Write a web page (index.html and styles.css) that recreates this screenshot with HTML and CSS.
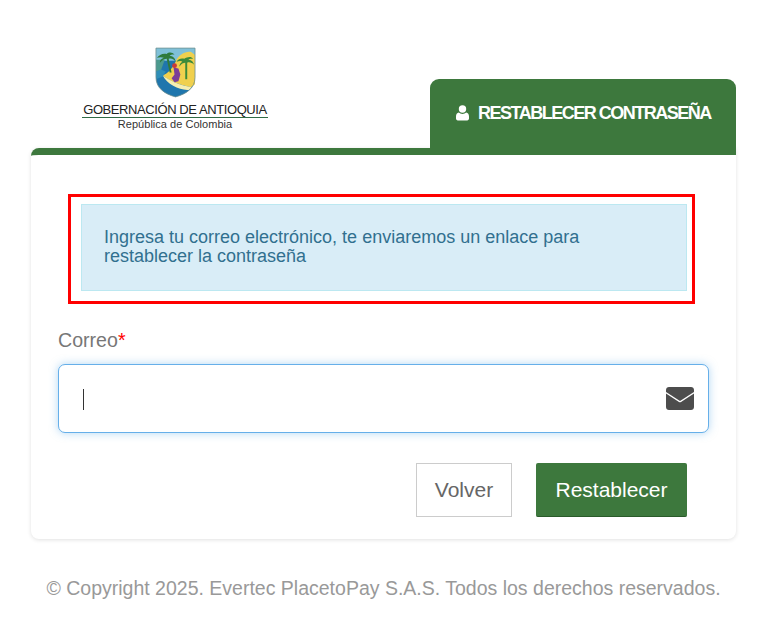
FILE: index.html
```html
<!DOCTYPE html>
<html lang="es">
<head>
<meta charset="utf-8">
<title>Restablecer contraseña</title>
<link rel="stylesheet" href="styles.css">
</head>
<body>
<main class="page">
  <header class="head">
    <div class="logo">
      <svg class="shield" width="41" height="51" viewBox="0 0 42 52">
        <path d="M1 1H41V31C41 42 32 48 21 51C10 48 1 42 1 31Z" fill="#1f76ad"/>
        <path d="M1 1H41V14H1Z" fill="#7fc0d8"/>
        <path d="M1 13H10L6 24L1 25Z" fill="#4b9a8e"/>
        <path d="M8 29C13 27 18 22 21 15C24 8 31 4 37 5L41 8V38L37 41C28 39 17 36 8 29Z" fill="#f0d04e"/>
        <path d="M8 29C14 34 26 39 37 41C37 43 35 44 33 44C24 43 12 38 8 29Z" fill="#f6eeb0"/>
        <path d="M1 25L6 23L11 25L8 30L1 33Z" fill="#2f8fb8"/>
        <path d="M12 7C8 6 4 8 2 11C5 10 7 10 9 11C6 12 5 14 5 16C8 13 10 12 12 12L15 26H17L14 12C17 11 20 13 21 15C21 11 18 9 15 9C16 8 18 7 20 8C18 5 14 5 12 7Z" fill="#2f7a3c"/>
        <path d="M30 12C27 11 24 12 22 15C25 14 27 14 28 15C26 16 25 18 25 20C27 17 29 16 31 16V33H33V16C35 15 38 16 40 18C39 14 36 13 34 13C35 12 37 12 39 12C37 9 33 10 30 12Z" fill="#3b8a3a"/>
        <path d="M19 21L24 22L26 28L24 35L20 36L17 32L20 28Z" fill="#7b3f98"/>
        <circle cx="20" cy="19" r="2.500" fill="#c83a3a"/>
        <path d="M1 1H41V31C41 42 32 48 21 51C10 48 1 42 1 31Z" fill="none" stroke="#6f8f8f" stroke-width=".8"/>
      </svg>
      <div class="logo-title">GOBERNACIÓN DE ANTIOQUIA</div>
      <div class="logo-sub">República de Colombia</div>
    </div>
    <h1 class="tab">
      <svg class="tab-icon" width="13" height="16" viewBox="0 0 13 16"><circle cx="6.500" cy="4" r="3.700" fill="#fff"/><path d="M2.800 7.600C3.800 8.500 5 9 6.500 9S9.200 8.500 10.200 7.600C12 7.800 13 9.400 13 11.500V13.500C13 14.600 12.200 15.400 11.200 15.400H1.800C.8 15.400 0 14.600 0 13.500V11.500C0 9.400 1 7.800 2.800 7.600Z" fill="#fff"/></svg>
      <span>RESTABLECER CONTRASEÑA</span>
    </h1>
  </header>
  <section class="card">
    <div class="highlight">
      <p class="alert">Ingresa tu correo electrónico, te enviaremos un enlace para restablecer la contraseña</p>
    </div>
    <form class="form">
      <label class="label" for="correo">Correo<span class="req">*</span></label>
      <div class="field">
        <span class="caret"></span>
        <input class="input" id="correo" type="email">
        <svg class="mail" width="28" height="23" viewBox="0 0 28 23"><path d="M3 0H25C26.700 0 28 1.300 28 3V5L14 14L0 5V3C0 1.300 1.300 0 3 0Z" fill="#4d4d4d"/><path d="M0 6.500L13 14.900C13.600 15.300 14.400 15.300 15 14.900L28 6.500V20C28 21.700 26.700 23 25 23H3C1.300 23 0 21.700 0 20Z" fill="#4d4d4d"/></svg>
      </div>
      <div class="actions">
        <a class="btn btn-back" href="#">Volver</a>
        <button class="btn btn-main" type="button">Restablecer</button>
      </div>
    </form>
  </section>
  <footer class="foot">© Copyright 2025. Evertec PlacetoPay S.A.S. Todos los derechos reservados.</footer>
</main>
</body>
</html>
```
FILE: styles.css
```css
* { box-sizing: border-box; }
html, body { margin: 0; background: #fff; }
body { font-family: "Liberation Sans", Arial, sans-serif; color: #777; }
.page { width: 705px; margin-left: 31px; }
.head { display: flex; justify-content: space-between; align-items: flex-end; height: 148px; }
.logo { width: 288px; display: flex; flex-direction: column; align-items: center; padding-bottom: 17px; color: #333; }
.shield { display: block; margin-bottom: 5px; filter: blur(.4px); }
.logo-title { width: 186px; height: 15px; font-size: 13px; line-height: 14px; letter-spacing: -.42px; text-align: center; white-space: nowrap; border-bottom: 1px solid #2f6b45; color: #222; }
.logo-sub { font-size: 11px; line-height: 13px; letter-spacing: .03px; color: #333; }
.tab { display: flex; align-items: center; gap: 9px; width: 306px; height: 69px; margin: 0; padding: 0 25px 1px 26px; background: #3d783d; border-radius: 9px 9px 0 0; color: #fff; font-size: 18px; font-weight: 700; letter-spacing: -1.500px; white-space: nowrap; }
.tab-icon { flex: none; }
.card { height: 391px; padding: 39px 27px 0; background: #fff; border-top: 7px solid #3d783d; border-radius: 8px 0 8px 8px; box-shadow: 0 1px 4px rgba(0,0,0,.12); }
.highlight { width: 627px; height: 110px; margin-left: 10px; padding: 7px 7px 0 10px; border: 3px solid #f00; }
.alert { width: 606px; height: 87px; margin: 0; padding: 23px 22px 0; background: #d9edf7; border: 1px solid #bce8f1; color: #31708f; font-size: 18px; line-height: 19px; }
.form { display: block; }
.label { display: block; margin-top: 25px; font-size: 19.600px; line-height: 22px; color: #777; }
.req { color: #f00; }
.field { position: relative; width: 651px; height: 69px; margin-top: 13px; border: 1px solid #66afe9; border-radius: 7px; box-shadow: 0 0 8px rgba(102,175,233,.5); background: #fff; }
.input { display: block; width: 100%; height: 100%; padding: 0 60px 0 24px; border: 0; outline: 0; border-radius: 7px; background: transparent; font: 18px "Liberation Sans", Arial, sans-serif; }
.caret { position: absolute; left: 24px; top: 24px; width: 1px; height: 21px; background: #333; }
.mail { position: absolute; right: 14px; top: 22px; }
.actions { display: flex; justify-content: flex-end; gap: 24px; padding-right: 22px; margin-top: 30px; }
.btn { display: flex; align-items: center; justify-content: center; height: 54px; font: 21px "Liberation Sans", Arial, sans-serif; text-decoration: none; }
.btn-back { width: 96px; background: #fff; border: 1px solid #ccc; color: #666; }
.btn-main { width: 151px; padding: 0; background: #3d783d; border: 0; border-bottom: 1px solid #2a5a2a; border-radius: 2px; color: #fff; }
.foot { margin-top: 38px; text-align: center; font-size: 19.500px; line-height: 22px; color: #999; }
```
